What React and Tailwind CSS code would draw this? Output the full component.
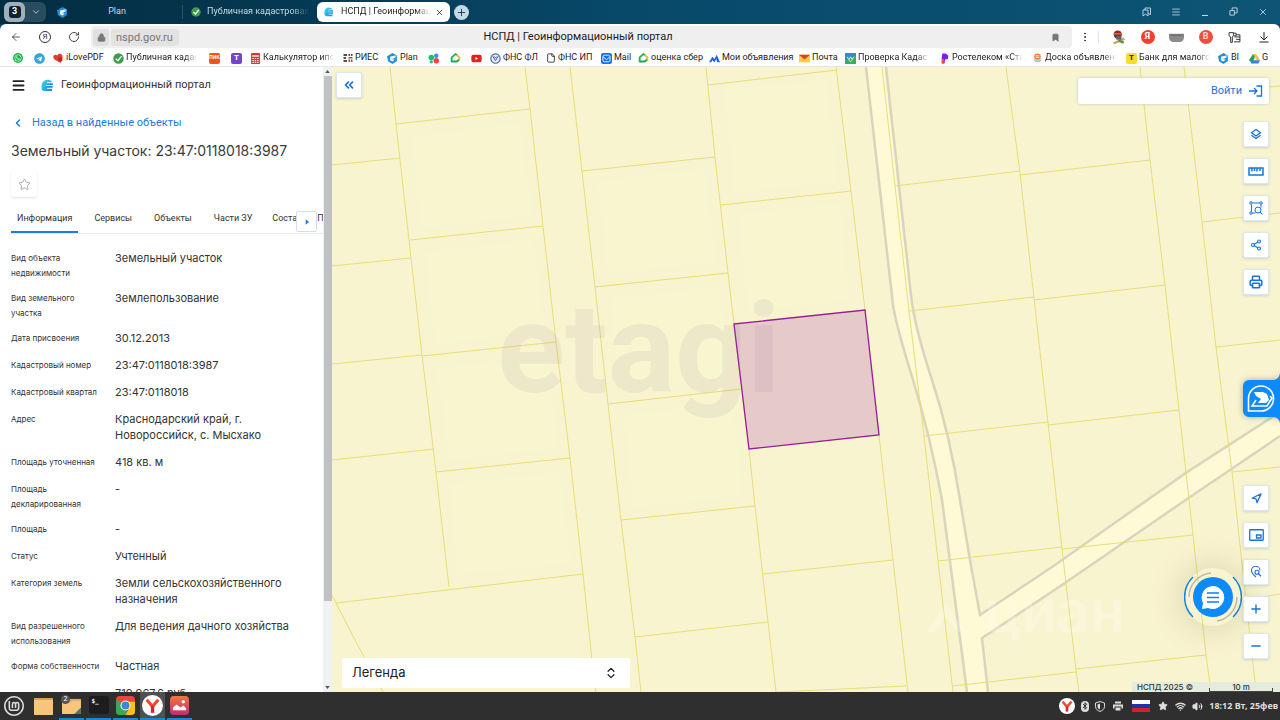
import React, { useState } from 'react';
import {
  ArrowLeft,
  Bluetooth,
  Bookmark,
  ChevronDown,
  ChevronLeft,
  ChevronsLeft,
  ChevronsUpDown,
  EllipsisVertical,
  File,
  Lock,
  Menu,
  Minus,
  Navigation,
  Plus,
  Printer,
  RotateCw,
  Share2,
  Star,
  Volume2,
  Wifi,
  X,
} from 'lucide-react';
import { FaTelegram, FaWhatsapp, FaYoutube } from 'react-icons/fa';
import { SiLinuxmint } from 'react-icons/si';

const FADE = '[mask-image:linear-gradient(to_right,#000_82%,transparent)]';

/* ---------- small logos ---------- */

const PlanLogo = ({ className }) => (
  <svg viewBox="0 0 20 20" className={className}>
    <path d="M10 0 18 4.500v10L10 20 2 15 0 6z" fill="#1b8fe3" />
    <path d="M6 6.500 14 5l1 3.500-7 3 6 .5-4 3.500-5-3z" fill="#fff" />
    <path d="M13 3l5 2-3 4z" fill="#7fd0ff" />
  </svg>
);

const CheckLogo = ({ className }) => (
  <svg viewBox="0 0 20 20" className={className}>
    <circle cx="10" cy="10" r="9.500" fill="#3f9c4a" />
    <path d="M5 10.500 9 14l6.500-8" fill="none" stroke="#fff" strokeWidth="2.600" />
  </svg>
);

const PortalLogo = ({ className }) => (
  <svg viewBox="0 0 24 24" className={className}>
    <defs>
      <linearGradient id="portal" x1="0" y1="0" x2="1" y2="1">
        <stop offset="0" stopColor="#35e0dc" />
        <stop offset="1" stopColor="#1684f2" />
      </linearGradient>
    </defs>
    <path
      d="M20 22H6a5 5 0 0 1-5-5v-5A10.500 10.500 0 0 1 12 1.500c6 0 10 4 10 9z"
      fill="url(#portal)"
    />
    <path d="M11 7h12M9 12h14M11 17h10" stroke="#fff" strokeWidth="2" />
    <path d="M11 9.500h11M9 14.500h12" stroke="#1a86ea" strokeWidth="1.600" />
  </svg>
);

const HouseLogo = ({ className }) => (
  <svg viewBox="0 0 20 20" className={className}>
    <path d="M3 17V8l7-6 4 3" fill="none" stroke="#1fb35b" strokeWidth="3.400" />
    <path d="M12 3.500 17 8v5" fill="none" stroke="#f5b83d" strokeWidth="3.400" />
    <path d="M3 15.500h7a6 6 0 0 0 6-4" fill="none" stroke="#24a35a" strokeWidth="3.400" />
  </svg>
);

const HeartLogo = ({ className }) => (
  <svg viewBox="0 0 20 20" className={className}>
    <path d="M12 19 2 9.500C-1 5 4-1 9 4c5-5 12 1 8 6z" fill="#e33b35" transform="rotate(-12 10 10)" />
    <path d="M10 8h7v7h-7z" fill="#c4221d" />
  </svg>
);

const CalcLogo = ({ className }) => (
  <svg viewBox="0 0 20 20" className={className}>
    <rect x="2" width="16" height="20" rx="1" fill="#d5362f" />
    <path d="M4 5.500h12" stroke="#fff" strokeWidth="2.500" />
    <path d="M4.500 10h11M4.500 13.500h11M4.500 17h11" stroke="#fff" strokeWidth="2" strokeDasharray="2.600 1.600" />
  </svg>
);

const GridLogo = ({ className }) => (
  <svg viewBox="0 0 20 20" className={className}>
    <path d="M1 2h7v4H1zM1 8h5v4H1zM1 14h7v4H1zM11 2h3v4h-3zM16 2h3v4h-3z" fill="#5d4b48" />
    <path d="M11 8h8v3h-8zM11 13h3v5h-3zM16 13h3v5h-3z" fill="#a5463d" />
  </svg>
);

const DotsLogo = ({ className }) => (
  <svg viewBox="0 0 20 20" className={className}>
    <circle cx="6" cy="8" r="5" fill="#12c264" />
    <circle cx="15" cy="5" r="4" fill="#1f9cf0" />
    <circle cx="15" cy="14" r="5" fill="#f0443c" />
    <circle cx="6" cy="16" r="3" fill="#1bbf8c" />
  </svg>
);

const EmblemLogo = ({ className }) => (
  <svg viewBox="0 0 20 20" className={className}>
    <circle cx="10" cy="10" r="8.500" fill="#e9eef6" stroke="#46659b" strokeWidth="2" />
    <path d="M5 6l5 8 5-8M7 6l3 3 3-3" fill="none" stroke="#46659b" strokeWidth="1.800" />
  </svg>
);

const MailLogo = ({ className }) => (
  <svg viewBox="0 0 20 20" className={className}>
    <rect width="20" height="20" rx="4" fill="#1470e8" />
    <rect x="3.500" y="4" width="13" height="12" rx="3" fill="none" stroke="#fff" strokeWidth="1.600" />
    <path d="m4 7 6 5 6-5" fill="none" stroke="#fff" strokeWidth="1.600" />
  </svg>
);

const PeaksLogo = ({ className }) => (
  <svg viewBox="0 0 20 20" className={className}>
    <path d="M0 17 6 7l4 4 4-8 6 14h-5l-2-6-3 6-4-4-2 4z" fill="#1e63e9" />
  </svg>
);

const PostLogo = ({ className }) => (
  <svg viewBox="0 0 20 20" className={className}>
    <path d="M0 3h20v14H0z" fill="#ffcf3a" />
    <path d="M0 3h20l-10 9z" fill="#e8392d" />
  </svg>
);

const CadastreLogo = ({ className }) => (
  <svg viewBox="0 0 20 20" className={className}>
    <rect width="20" height="20" fill="#2d8fd0" />
    <path d="M0 20V13l20-8v15z" fill="#3cae55" />
    <path d="m4 7 3 5 3-5 3 5 3-5M7 13l3 3 3-3" fill="none" stroke="#e7f6ff" strokeWidth="1.600" />
  </svg>
);

const TelecomLogo = ({ className }) => (
  <svg viewBox="0 0 20 20" className={className}>
    <path d="M6 1h6l5 4-1 6-5 1-1 7H5V8z" fill="#7a1cff" />
    <path d="M5 11h4l-1 8H5z" fill="#ff5a1f" />
  </svg>
);

const BoardLogo = ({ className }) => (
  <svg viewBox="0 0 20 20" className={className}>
    <circle cx="10" cy="7" r="6" fill="#f08344" />
    <path d="M2 9c2 4 14 4 16 0l-3 8H6z" fill="#a9cbe0" />
    <path d="M7 5h6M7 8h6" stroke="#fff" strokeWidth="1.500" />
  </svg>
);

const DriveLogo = ({ className }) => (
  <svg viewBox="0 0 20 20" className={className}>
    <path d="M7 2h6L6 19 0 13z" fill="#22a45d" />
    <path d="M7 2h6l7 11h-6z" fill="#fbc02d" />
    <path d="M6 13h14l-3 6H3z" fill="#3b7de9" />
  </svg>
);

const ChromeLogo = ({ className }) => (
  <svg viewBox="0 0 20 20" className={className}>
    <rect width="20" height="20" rx="4" fill="#e5483b" />
    <path d="M0 4v12a4 4 0 0 0 4 4h6l3-8-9-6z" fill="#3aa757" />
    <path d="M20 6v10a4 4 0 0 1-4 4h-6l5-9-3-5z" fill="#fbc116" />
    <circle cx="10" cy="10" r="5.300" fill="#fff" />
    <circle cx="10" cy="10" r="4.200" fill="#3f86d6" />
  </svg>
);

const YandexLogo = ({ className }) => (
  <svg viewBox="0 0 20 20" className={className}>
    <circle cx="10" cy="10" r="10" fill="#fff" />
    <path d="m4.500 4.500 5.500 6.500 5.500-6.500" fill="none" stroke="#ee4a2b" strokeWidth="3" />
    <path d="M10 10.500V17" stroke="#d8213b" strokeWidth="3.200" />
  </svg>
);

const LetterBadge = ({ letter, className }) => (
  <span className={`flex shrink-0 items-center justify-center font-bold ${className}`}>{letter}</span>
);

/* ---------- browser ---------- */

const iconBox = 'size-[11px] shrink-0';

const bookmarks = [
  { id: 'wa', width: 'w-[21px]', icon: <FaWhatsapp className="size-[10px] shrink-0 rounded-full bg-[#22b24c] p-px text-white" /> },
  { id: 'tg', width: 'w-[19px]', icon: <FaTelegram className="size-[11px] shrink-0 text-[#35a3de]" /> },
  { id: 'pdf', width: 'w-[60px]', icon: <HeartLogo className={iconBox} />, label: 'iLovePDF' },
  { id: 'pub', width: 'w-[96px]', icon: <CheckLogo className={iconBox} />, label: 'Публичная кадастровая', cut: true },
  { id: 'pik', width: 'w-[22px]', icon: <LetterBadge letter="ПИК" className="size-[11px] rounded-[2px] bg-[#f4511e] text-[5px] text-white" /> },
  { id: 't', width: 'w-[19px]', icon: <LetterBadge letter="Т" className="size-[11px] rounded-[2px] bg-[#7444d0] text-[8px] text-white" /> },
  { id: 'calc', width: 'w-[93px]', icon: <CalcLogo className={iconBox} />, label: 'Калькулятор ипотеки', cut: true },
  { id: 'ries', width: 'w-[44px]', icon: <GridLogo className="size-[10px] shrink-0" />, label: 'РИЕС' },
  { id: 'plan', width: 'w-[41px]', icon: <PlanLogo className={iconBox} />, label: 'Plan' },
  { id: 'dots', width: 'w-[22px]', icon: <DotsLogo className={iconBox} /> },
  { id: 'house', width: 'w-[21px]', icon: <HouseLogo className={iconBox} /> },
  { id: 'yt', width: 'w-[19px]', icon: <FaYoutube className="size-[11px] shrink-0 text-[#e6201d]" /> },
  { id: 'fl', width: 'w-[56px]', icon: <EmblemLogo className={iconBox} />, label: 'ФНС ФЛ' },
  { id: 'ip', width: 'w-[55px]', icon: <File className="size-[10px] shrink-0 text-[#222]" />, label: 'ФНС ИП' },
  { id: 'mail', width: 'w-[37px]', icon: <MailLogo className={iconBox} />, label: 'Mail' },
  { id: 'sber', width: 'w-[71px]', icon: <HouseLogo className={iconBox} />, label: 'оценка сбер' },
  { id: 'ads', width: 'w-[90px]', icon: <PeaksLogo className={iconBox} />, label: 'Мои объявления' },
  { id: 'post', width: 'w-[46px]', icon: <PostLogo className={iconBox} />, label: 'Почта' },
  { id: 'check', width: 'w-[94px]', icon: <CadastreLogo className={iconBox} />, label: 'Проверка Кадастра', cut: true },
  { id: 'rt', width: 'w-[93px]', icon: <TelecomLogo className={iconBox} />, label: 'Ростелеком «Старт»', cut: true },
  { id: 'board', width: 'w-[94px]', icon: <BoardLogo className={iconBox} />, label: 'Доска объявлений', cut: true },
  { id: 'bank', width: 'w-[92px]', icon: <LetterBadge letter="Т" className="size-[11px] rounded-[2px] bg-[#fbdb2c] text-[8px] text-[#222]" />, label: 'Банк для малого бизнеса', cut: true },
  { id: 'bi', width: 'w-[31px]', icon: <PlanLogo className={iconBox} />, label: 'BI' },
  { id: 'g', width: 'w-[25px]', icon: <DriveLogo className={iconBox} />, label: 'G' },
];

const TabBar = () => (
  <div className="flex h-6 shrink-0 items-center bg-linear-to-r from-[#032c40] via-[#08496a] to-[#0d5475] pl-1 text-[9px] text-[#c9dbe5]">
    <button aria-label="Группы вкладок" className="flex h-5 w-[42px] items-center rounded-md bg-white/15">
      <span className="flex h-5 w-[21px] items-center justify-center rounded-md bg-[#9fb0ba]">
        <span className="flex size-3 items-center justify-center rounded-[3px] bg-[#0c2431] text-[9px] font-bold text-white">3</span>
      </span>
      <ChevronDown className="ml-[6px] size-[10px]" />
    </button>
    <button className="ml-[11px] flex w-[126px] items-center border-r border-white/15">
      <PlanLogo className="size-[11px]" />
      <span className="flex-1 pr-4 text-center">Plan</span>
    </button>
    <button className="ml-2 flex w-[118px] items-center gap-[6px]">
      <CheckLogo className="size-[10px] shrink-0" />
      <span className={`w-[102px] overflow-hidden text-left whitespace-nowrap ${FADE}`}>Публичная кадастровая карта</span>
    </button>
    <div className="ml-2 flex h-5 w-[133px] items-center rounded-md bg-white pr-[6px] pl-[7px] text-[#1c1c1c]">
      <PortalLogo className="size-[10px] shrink-0" />
      <button className={`ml-[7px] flex-1 overflow-hidden text-left whitespace-nowrap ${FADE}`}>НСПД | Геоинформационный</button>
      <button aria-label="Закрыть вкладку" className="ml-1"><X className="size-[9px]" /></button>
    </div>
    <button aria-label="Новая вкладка" className="ml-1 flex size-[15px] items-center justify-center rounded-full bg-[#c3dbe6] text-[#234]">
      <Plus className="size-[11px]" />
    </button>
    <div className="ml-auto flex pr-[3px]">
      <button aria-label="Коллекции" className="flex w-[29px] justify-center">
        <svg viewBox="0 0 20 20" className="size-[10px]" fill="none" stroke="currentColor" strokeWidth="1.800">
          <path d="M2 6h10v12l-5-4-5 4zM6 6V2h11v13l-5-2" />
        </svg>
      </button>
      <button aria-label="Меню" className="flex w-[29px] justify-center"><Menu className="size-[10px]" /></button>
      <button aria-label="Свернуть" className="flex w-[29px] items-end justify-center pb-px"><span className="h-px w-[6px] bg-[#c9dbe5]" /></button>
      <button aria-label="Восстановить" className="flex w-[29px] justify-center">
        <svg viewBox="0 0 20 20" className="size-[9px]" fill="none" stroke="currentColor" strokeWidth="2">
          <path d="M2 8h10v10H2zM7 8V2h11v11h-6" />
        </svg>
      </button>
      <button aria-label="Закрыть" className="flex w-[29px] justify-center"><X className="size-[10px]" /></button>
    </div>
  </div>
);

const AddressBar = () => (
  <div className="bg-[#0a4563]">
    <div className="flex h-[26px] shrink-0 items-center rounded-t-md bg-white pr-[2px] text-[#333]">
      <button aria-label="Назад" className="ml-[10px]"><ArrowLeft className="size-3" strokeWidth={1.6} /></button>
      <button aria-label="Яндекс" className="ml-[17px] flex size-3 items-center justify-center rounded-full border border-[#333] text-[8px]">Я</button>
      <button aria-label="Обновить" className="ml-[17px]"><RotateCw className="size-3" strokeWidth={1.8} /></button>
      <div className="ml-[11px] flex h-[22px] min-w-0 flex-1 items-center rounded-[4px] bg-[#efefef] pl-[2px]">
        <span className="flex h-[17px] w-4 items-center justify-center rounded-[3px] bg-[#e0e0e0] text-[#777]">
          <Lock className="size-[9px]" fill="currentColor" />
        </span>
        <input
          aria-label="Адрес"
          defaultValue="nspd.gov.ru"
          className="ml-[2px] h-[17px] w-[68px] rounded-[3px] bg-[#e2e2e2] pl-[5px] text-[11px] text-[#777] outline-none"
        />
        <span className="flex-1 pr-[74px] text-center text-[11px] text-[#1b1b1b]">НСПД | Геоинформационный портал</span>
        <button aria-label="В закладки" className="mr-3 text-[#777]"><Bookmark className="size-[9px]" fill="currentColor" /></button>
      </div>
      <button aria-label="Ещё" className="ml-[7px]"><EllipsisVertical className="size-3" /></button>
      <span className="ml-[7px] h-3 w-px bg-[#e3e3e3]" />
      <div className="ml-[5px] flex items-center">
        <button aria-label="Профиль" className="flex w-[29px] justify-center">
          <svg viewBox="0 0 20 20" className="size-[15px]">
            <path d="M2 17 17 10l2 3-14 6z" fill="#d6a562" />
            <path d="M10 14l7 3" stroke="#598d3c" strokeWidth="3" />
            <circle cx="9" cy="6" r="5.500" fill="#8f2f24" />
            <path d="M7 8h7v5H7z" fill="#5c6474" />
            <path d="M4 5h10" stroke="#d9633d" strokeWidth="2" />
          </svg>
        </button>
        <button aria-label="Яндекс ID" className="flex w-[29px] justify-center">
          <LetterBadge letter="Я" className="size-[14px] rounded-full bg-[#f0402e] text-[9px] text-white" />
        </button>
        <button aria-label="Расширение" className="flex w-[29px] justify-center">
          <svg viewBox="0 0 20 12" className="h-[9px] w-[15px]">
            <path d="M0 1h20v5a6 6 0 0 1-6 6H6a6 6 0 0 1-6-6z" fill="#8b8b8b" />
            <path d="M2 3h16" stroke="#6c6c6c" strokeWidth="2" />
          </svg>
        </button>
        <button aria-label="Блокировщик" className="flex w-[29px] justify-center">
          <LetterBadge letter="B" className="size-[14px] rounded-full bg-[#e8513d] text-[9px] text-[#ffd5cc]" />
        </button>
        <button aria-label="Пароли" className="flex w-[29px] justify-center">
          <svg viewBox="0 0 24 24" className="size-[13px]" fill="none" stroke="#333" strokeWidth="1.800">
            <path d="M2 3h8v6l-2 2v10H5V11L2 9zM10 4h5v5h-4M12 11h10v9H11M15 15.500h7M22 11V7h-7" />
          </svg>
        </button>
        <button aria-label="Загрузки" className="flex w-[29px] justify-center">
          <svg viewBox="0 0 24 24" className="size-3" fill="none" stroke="#222" strokeWidth="2">
            <path d="M12 2v15M5 11l7 7 7-7M3 22h18" />
          </svg>
        </button>
      </div>
    </div>
  </div>
);

const Bookmarks = () => (
  <nav className="flex h-[17px] shrink-0 items-center overflow-hidden border-b border-[#e6e6e6] bg-white pl-[13px] text-[9px] text-[#222]">
    {bookmarks.map((item) => (
      <a key={item.id} href="#" className={`flex shrink-0 items-center gap-[2px] ${item.width}`}>
        {item.icon}
        {item.label && (
          <span className={item.cut ? `w-[71px] overflow-hidden whitespace-nowrap ${FADE}` : 'whitespace-nowrap'}>{item.label}</span>
        )}
      </a>
    ))}
  </nav>
);

/* ---------- object card ---------- */

const properties = [
  ['Вид объекта недвижимости', 'Земельный участок'],
  ['Вид земельного участка', 'Землепользование'],
  ['Дата присвоения', '30.12.2013'],
  ['Кадастровый номер', '23:47:0118018:3987'],
  ['Кадастровый квартал', '23:47:0118018'],
  ['Адрес', 'Краснодарский край, г. Новороссийск, с. Мысхако'],
  ['Площадь уточненная', '418 кв. м'],
  ['Площадь декларированная', '-'],
  ['Площадь', '-'],
  ['Статус', 'Учтенный'],
  ['Категория земель', 'Земли сельскохозяйственного назначения'],
  ['Вид разрешенного использования', 'Для ведения дачного хозяйства'],
  ['Форма собственности', 'Частная'],
  ['', '719 967.6 руб.'],
];

const tabs = ['Информация', 'Сервисы', 'Объекты', 'Части ЗУ'];

const ObjectPanel = () => {
  const [activeTab, setActiveTab] = useState('Информация');

  return (
    <aside className="flex w-[332px] shrink-0 overflow-hidden bg-white font-['Inter',sans-serif] text-[#333]">
      <div className="min-w-0 flex-1 overflow-hidden">
        <header className="flex h-9 items-center pl-[11px] font-[Roboto,sans-serif]">
          <button aria-label="Меню"><Menu className="size-[15px] text-[#222]" strokeWidth={3} /></button>
          <PortalLogo className="ml-[15px] size-[13px]" />
          <span className="ml-[7px] text-[11px]">Геоинформационный портал</span>
        </header>
        <a href="#" className="mt-3 flex h-4 items-center pl-3 font-[Roboto,sans-serif] text-[11px] text-[#1a7be0]">
          <ChevronLeft className="size-3" strokeWidth={3} />
          <span className="ml-2">Назад в найденные объекты</span>
        </a>
        <h1 className="mt-[10px] pl-[11px] text-[14px] leading-5 text-[#3b3b3b]">Земельный участок: 23:47:0118018:3987</h1>
        <button aria-label="В избранное" className="mt-[10px] ml-[11px] flex size-[26px] items-center justify-center rounded-[2px] text-[#999] shadow-[0_1px_2px_rgba(0,0,0,0.12)]">
          <Star className="size-[13px]" strokeWidth={1.5} />
        </button>
        <div className="mt-[10px] ml-[11px] flex h-[27px] overflow-hidden border-b border-[#e6e9ee] font-[Roboto,sans-serif] text-[9px]">
          {tabs.map((tab) => (
            <button
              key={tab}
              onClick={() => setActiveTab(tab)}
              className={`mr-[10px] shrink-0 border-b-2 px-[6px] ${activeTab === tab ? 'border-[#1a7be0]' : 'border-transparent'}`}
            >
              {tab}
            </button>
          ))}
          <button className="w-7 shrink-0 overflow-hidden border-b-2 border-transparent pl-1 text-left whitespace-nowrap">Состав</button>
          <button aria-label="Следующие вкладки" className="mt-1 flex h-[21px] w-[21px] shrink-0 items-center justify-center rounded-[2px] border border-[#cfe0f3] text-[#1a7be0]">
            <svg viewBox="0 0 6 8" className="h-[6px] w-1"><path d="M1 0l5 4-5 4z" fill="currentColor" /></svg>
          </button>
          <button className="shrink-0 border-b-2 border-transparent">Правообладатели</button>
        </div>
        <dl className="mt-4 pl-[11px]">
          {properties.map(([name, value]) => (
            <div key={value + name} className="flex gap-2 pb-[10px]">
              <dt className="mt-px -mb-px w-24 shrink-0 text-[8px] leading-[15px]">{name}</dt>
              <dd className="max-w-[190px] pb-px text-[11px] leading-4">{value}</dd>
            </div>
          ))}
        </dl>
      </div>
      <div className="flex w-[9px] shrink-0 flex-col items-center bg-[#f0f1f3] text-[#555]">
        <svg viewBox="0 0 6 4" className="my-[3px] h-[3px] w-[5px] shrink-0"><path d="M0 4h6L3 0z" fill="currentColor" /></svg>
        <div className="h-[84%] w-2 bg-[#c0c1c4]" />
        <svg viewBox="0 0 6 4" className="mt-auto mb-[3px] h-[3px] w-[5px] shrink-0"><path d="M0 0h6L3 4z" fill="currentColor" /></svg>
      </div>
    </aside>
  );
};

/* ---------- map ---------- */

const parcelLines = [
  'M390 67 396 124 411 258 422 355 436 472 449 587',
  'M525 67 530 109 543 226 556 342 570 458 583 574 592 660 596 692',
  'M396 124 530 109M410 240 543 226M422 356 556 342M436 472 570 458M336 603 583 574',
  'M332 165 400 158M332 266 411 258M332 364 422 355M332 460 434 449M332 595 336 603 355 640 383 692',
  'M570 67 582 171 595 287 608 404 621 520 635 637 641 692',
  'M706 67 715 157 728 273 734 324 749 449 755 506 768 622 776 692',
  'M582 171 715 157M595 287 728 273M608 404 741 389M621 520 755 506M635 637 768 622',
  'M836 67 851 191 865 310 879 435 893 560 908 692',
  'M708 85 837 70M721 205 851 191M763 574 893 560M776 692 906 686',
  'M882 67 895 186 909 311 924 436 938 561 953 692',
  'M1006 67 1020 173 1034 298 1048 423 1062 549 1076 670 1079 692',
  'M895 186 1020 171M909 311 1034 297M924 436 1048 422M938 561 1062 547M953 686 1076 672',
  'M1140 67 1150 160 1165 285 1179 410 1193 535 1206 655 1211 692',
  'M1020 175 1150 160M1034 300 1165 285M1048 425 1179 410M1062 549 1193 535M1076 669 1206 655',
  'M1184 67 1202 222 1216 347 1232 472 1246 600 1256 692',
  'M1202 222 1280 213M1216 347 1280 340M1232 472 1280 467M1246 600 1280 594M1268 87 1280 86',
];

const CadastralMap = () => (
  <svg viewBox="332 67 948 625" preserveAspectRatio="xMinYMin slice" className="absolute inset-0 size-full bg-[#f9f4d0]">
    <g fill="#f7f6cf">
      <path d="M413 136 520 124 532 216 420 228zM426 252 533 240 545 332 435 344zM437 368 547 356 559 448 449 460zM449 484 560 472 570 564 458 574z" />
      <path d="M597 181 704 169 716 262 608 274zM610 299 718 287 730 378 620 392zM624 415 732 403 743 495 634 508zM724 90 826 80 838 182 735 192zM738 214 840 204 850 300 748 311z" />
    </g>
    <path
      d="M865 67 893 305Q896 325 913 380T942 500L967 692H988L982 638 1280 436V412L980 615 970 560 960 500Q948 425 932 380T910 295L884 67z"
      fill="#fefad5"
    />
    <g fill="none" stroke="#dbd4bd" strokeWidth="2.500">
      <path d="M866 67 893 305Q896 325 913 380T942 500L967 692" />
      <path d="M886 67 911 295Q914 325 932 380T960 500L970 560 980 615 1055 565 1187 472 1280 412" />
      <path d="M988 692 982 638 1062 585 1190 497 1280 436" />
    </g>
    <g fill="none" stroke="#e5df76" strokeWidth="1">
      {parcelLines.map((line) => (
        <path key={line} d={line} />
      ))}
    </g>
    <path d="M734 324 865 310 879 435 749 449z" fill="#e6c9c9" stroke="#991d96" strokeWidth="1.300" />
    <text x="497" y="392" fontFamily="Roboto, sans-serif" fontWeight="700" fontSize="126" fill="#8a6a9a" opacity="0.09">etagi</text>
    <g fill="#fff" opacity="0.2">
      <path d="M926 632 946 604 966 632 958 632 946 616 936 632z" />
      <text x="984" y="632" fontFamily="Inter, sans-serif" fontWeight="600" fontSize="58">циан</text>
    </g>
  </svg>
);

const MapButton = ({ label, children }) => (
  <button
    aria-label={label}
    className="flex size-[26px] items-center justify-center rounded-[2px] border border-[#dbe8f0] bg-white text-[#1a73d8] shadow-[0_1px_3px_rgba(60,120,180,0.25)]"
  >
    {children}
  </button>
);

const LayersIcon = () => (
  <svg viewBox="0 0 24 24" className="size-3" fill="none" stroke="currentColor" strokeWidth="2.600">
    <path d="M12 3 21 9.500 12 16 3 9.500zM3 14.500 12 21l9-6.500" />
  </svg>
);

const RulerIcon = () => (
  <svg viewBox="0 0 32 18" className="h-[9px] w-4" fill="none" stroke="currentColor" strokeWidth="3">
    <path d="M2 2h28v14H2zM8 2v7M13 2v6M18 2v7M24 2v6" />
  </svg>
);

const AreaSearchIcon = () => (
  <svg viewBox="0 0 28 28" className="size-[14px]" fill="none" stroke="currentColor" strokeWidth="2">
    <circle cx="4" cy="4" r="2.500" />
    <circle cx="24" cy="4" r="2.500" />
    <circle cx="4" cy="24" r="2.500" />
    <path d="M7 4h14M5 7v14M24 7v6M7 24h6" />
    <circle cx="18" cy="18" r="6" />
    <path d="m22 22 5 5" />
  </svg>
);

const MiniMapIcon = () => (
  <svg viewBox="0 0 30 24" className="h-3 w-[15px]" fill="none" stroke="currentColor" strokeWidth="2.600">
    <rect x="1.500" y="1.500" width="27" height="21" rx="1" />
    <path d="M15 12h9v6h-9z" />
  </svg>
);

const PinSearchIcon = () => (
  <svg viewBox="0 0 24 24" className="size-3" fill="none" stroke="currentColor" strokeWidth="2.200">
    <path d="M12 22C6 17 3 14 3 9.500a8.500 8.500 0 0 1 17-1" />
    <circle cx="14" cy="12.500" r="4" />
    <path d="m17 15.500 5 5" />
  </svg>
);

const ChatButton = () => (
  <button aria-label="Чат" className="absolute right-[38px] bottom-[66px] size-[58px] rounded-full shadow-[0_0_28px_8px_rgba(120,110,60,0.16)]">
    <svg viewBox="0 0 58 58" className="size-full" fill="none">
      <path d="M9 9a28 28 0 0 0 0 40M49 9a28 28 0 0 1 0 40" stroke="#1384e6" strokeWidth="1.500" />
      <path d="M5 29A24 24 0 0 1 27 5M53 29A24 24 0 0 1 33 53" stroke="#c4b7a5" strokeWidth="1.500" />
      <circle cx="29" cy="29" r="20" fill="#0d8bfb" />
      <path d="M29 18a11.500 11.500 0 1 1-5 22l-6 1 1-6a11.500 11.500 0 0 1 10-17z" fill="#fff" />
      <path d="M23 25h12M23 29.500h12M23 34h12" stroke="#0d7ff0" strokeWidth="1.700" />
    </svg>
  </button>
);

const MapView = () => (
  <main className="relative min-w-0 flex-1 overflow-hidden font-['Inter',sans-serif]">
    <CadastralMap />

    <div className="absolute top-[5px] left-1">
      <MapButton label="Свернуть панель"><ChevronsLeft className="size-[14px]" strokeWidth={3} /></MapButton>
    </div>

    <div className="absolute top-[11px] right-[11px] flex h-[26px] w-[191px] items-center justify-end rounded-[2px] bg-white pr-[6px] shadow-[0_0_3px_rgba(60,120,180,0.35)]">
      <button className="flex items-center gap-[6px] font-[Roboto,sans-serif] text-[11px] text-[#1a73d8]">
        Войти
        <svg viewBox="0 0 28 24" className="h-3 w-[15px]" fill="none" stroke="currentColor" strokeWidth="2.600">
          <path d="M1 12h16M11 6l6 6-6 6M16 2h10v20H16" />
        </svg>
      </button>
    </div>

    <div className="absolute top-[54px] right-[11px] flex flex-col gap-[11px]">
      <MapButton label="Слои"><LayersIcon /></MapButton>
      <MapButton label="Линейка"><RulerIcon /></MapButton>
      <MapButton label="Поиск по области"><AreaSearchIcon /></MapButton>
      <MapButton label="Поделиться"><Share2 className="size-3" strokeWidth={2.2} /></MapButton>
      <MapButton label="Печать"><Printer className="size-[14px]" strokeWidth={2.6} /></MapButton>
    </div>

    <button aria-label="Помощь" className="absolute top-[306px] right-0 h-[50px] w-[37px] drop-shadow-[0_0_3px_rgba(0,0,0,0.3)]">
      <svg viewBox="0 0 37 50" className="size-full">
        <path d="M37 0q-1 6-6 7H6a6 6 0 0 0-6 6v25a6 6 0 0 0 6 6h25q5 1 6 6z" fill="#0d8bfb" />
        <path d="M5.500 38V25.500a12.500 12.500 0 1 1 12.500 12.500z" fill="none" stroke="#fff" strokeWidth="1.600" />
        <path d="M11 19h9l4 2 2 6-3 3h-8l3-4-5-3z" fill="#fff" />
        <path d="m13 27-4 6h15l5-8-2-2" fill="none" stroke="#fff" strokeWidth="1.600" />
      </svg>
    </button>

    <ChatButton />

    <div className="absolute right-[11px] bottom-[33px] flex flex-col gap-[11px]">
      <MapButton label="Моё местоположение"><Navigation className="size-[11px]" strokeWidth={2.8} /></MapButton>
      <MapButton label="Обзорная карта"><MiniMapIcon /></MapButton>
      <MapButton label="Поиск точки"><PinSearchIcon /></MapButton>
      <MapButton label="Приблизить"><Plus className="size-[14px]" strokeWidth={2.4} /></MapButton>
      <MapButton label="Отдалить"><Minus className="size-[14px]" strokeWidth={2.4} /></MapButton>
    </div>

    <button className="absolute bottom-1 left-[10px] flex h-[30px] w-72 items-center justify-between rounded-[2px] bg-white pr-3 pl-[10px] text-[13px] text-[#222]">
      Легенда
      <ChevronsUpDown className="size-[14px]" strokeWidth={2.2} />
    </button>

    <div className="absolute right-0 bottom-0 flex h-[10px] w-[148px] items-center justify-between bg-[#e2ebdf]/90 pr-[7px] pl-[5px] text-[8px] font-medium text-[#333]">
      <span>НСПД 2025 ©</span>
      <span className="flex h-[9px] w-16 flex-col justify-end">
        <span className="text-center leading-[9px]">10 m</span>
        <span className="-mt-1 h-1 shrink-0 border-x border-b border-[#444]" />
      </span>
    </div>
  </main>
);

/* ---------- taskbar ---------- */

const FolderIcon = () => (
  <svg viewBox="0 0 20 18" className="h-[17px] w-[19px]">
    <path d="M0 0h20v17a1 1 0 0 1-1 1H1a1 1 0 0 1-1-1z" fill="#d9a25a" />
    <path d="M0 2h20v15a1 1 0 0 1-1 1H1a1 1 0 0 1-1-1z" fill="#f8c57c" />
  </svg>
);

const OpenFolderIcon = () => (
  <svg viewBox="0 0 20 18" className="h-[17px] w-[19px]">
    <path d="M0 2h20v16H0z" fill="#e0ab62" />
    <path d="M0 6h9l2-2h9v13a1 1 0 0 1-1 1H1a1 1 0 0 1-1-1z" fill="#f8c57c" />
    <path d="M20 11v7h-7z" fill="#51706f" />
  </svg>
);

const TaskButton = ({ label, active, children }) => (
  <button
    aria-label={label}
    className={`flex h-7 w-[25px] items-center justify-center border-b-2 border-[#1c88cc] ${active ? 'bg-[#505050]' : ''}`}
  >
    {children}
  </button>
);

const Taskbar = () => (
  <footer className="flex h-7 shrink-0 items-center bg-[#2f2f2f] pr-[2px] pl-1 font-['Noto_Sans',sans-serif] text-[#ddd]">
    <button aria-label="Меню системы" className="flex size-5 items-center justify-center">
      <SiLinuxmint className="size-5" />
    </button>
    <button aria-label="Файлы" className="mr-[6px] ml-[10px]"><FolderIcon /></button>
    <div className="flex gap-[2px]">
      <TaskButton label="Папка">
        <span className="relative">
          <OpenFolderIcon />
          <span className="absolute -top-[2px] -left-px flex size-[9px] items-center justify-center rounded-full bg-[#555] text-[7px] text-white">2</span>
        </span>
      </TaskButton>
      <TaskButton label="Терминал">
        <span className="h-[18px] w-5 rounded-[3px] bg-[#1d1d1f] pl-[3px] text-left font-['DejaVu_Sans_Mono',monospace] text-[6px] leading-[9px] font-bold text-white">$_</span>
      </TaskButton>
      <TaskButton label="Chrome"><ChromeLogo className="size-[19px]" /></TaskButton>
      <TaskButton label="Яндекс Браузер" active><YandexLogo className="size-[21px]" /></TaskButton>
      <TaskButton label="Просмотр изображений">
        <svg viewBox="0 0 20 20" className="size-[19px]">
          <defs>
            <linearGradient id="photo" x1="0" y1="0" x2="0" y2="1">
              <stop offset="0" stopColor="#f0763f" />
              <stop offset="1" stopColor="#c42b6d" />
            </linearGradient>
          </defs>
          <rect width="20" height="20" rx="4" fill="url(#photo)" />
          <path d="M3 15v-3l4-3 4 3 3-2 3 3v2z" fill="#fff" />
          <circle cx="14" cy="6" r="1.800" fill="#fff" />
        </svg>
      </TaskButton>
    </div>
    <div className="ml-auto flex items-center">
      <YandexLogo className="mr-[6px] size-4" />
      <span className="mr-[6px] flex h-[11px] w-2 items-center justify-center rounded-full bg-[#ddd] text-[#2f2f2f]">
        <Bluetooth className="size-2" strokeWidth={3} />
      </span>
      <svg viewBox="0 0 20 22" className="mr-2 h-[11px] w-[10px]">
        <path d="M10 1 19 4v7c0 5-4 8-9 10-5-2-9-5-9-10V4z" fill="none" stroke="currentColor" strokeWidth="2" />
        <path d="M10 5v12c-4-2-5-4-5-6V7z" fill="currentColor" />
      </svg>
      <svg viewBox="0 0 20 20" className="mr-[9px] size-[10px]" fill="currentColor">
        <path d="M4 1h12v4H4zM0 7h20v8h-3v-4H3v4H0zM5 13h10v6H5z" />
      </svg>
      <span className="mr-2 flex h-3 w-[18px] flex-col">
        <span className="flex-1 bg-white" />
        <span className="flex-1 bg-[#1c36a8]" />
        <span className="flex-1 bg-[#d3202a]" />
      </span>
      <Star className="mr-[7px] size-[10px]" fill="currentColor" />
      <Wifi className="mr-[6px] size-[11px]" strokeWidth={3} />
      <Volume2 className="mr-[6px] size-[11px]" fill="currentColor" />
      <time className="text-[9px] font-bold whitespace-nowrap">18:12 Вт, 25фев</time>
    </div>
  </footer>
);

const App = () => {
  return (
    <div className="flex h-screen flex-col overflow-hidden bg-white font-[Roboto,sans-serif]">
      <TabBar />
      <AddressBar />
      <Bookmarks />
      <div className="flex min-h-0 flex-1">
        <ObjectPanel />
        <MapView />
      </div>
      <Taskbar />
    </div>
  );
};

export default App;
